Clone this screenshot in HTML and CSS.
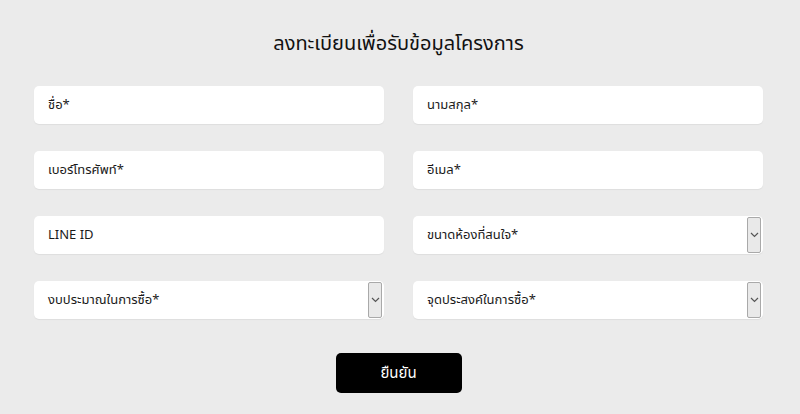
FILE: index.html
```html
<!DOCTYPE html>
<html lang="th">
<head>
    <meta charset="UTF-8">
    <meta name="viewport" content="width=device-width, initial-scale=1.0">
    <title>ลงทะเบียน</title>
    <link rel="stylesheet" href="styles.css">
</head>
<body>
    <section class="register">
        <h2 class="register-title">ลงทะเบียนเพื่อรับข้อมูลโครงการ</h2>
        <form class="register-form">
            <div class="field"><span class="field-text">ชื่อ*</span></div>
            <div class="field"><span class="field-text">นามสกุล*</span></div>
            <div class="field"><span class="field-text">เบอร์โทรศัพท์*</span></div>
            <div class="field"><span class="field-text">อีเมล*</span></div>
            <div class="field"><span class="field-text">LINE ID</span></div>
            <div class="field field-select">
                <span class="field-text">ขนาดห้องที่สนใจ*</span>
                <span class="select-arrow"><svg width="9" height="6" viewBox="0 0 9 6"><path d="M1 1l3.5 3.5L8 1" fill="none" stroke="#555" stroke-width="1.2"/></svg></span>
            </div>
            <div class="field field-select">
                <span class="field-text">งบประมาณในการซื้อ*</span>
                <span class="select-arrow"><svg width="9" height="6" viewBox="0 0 9 6"><path d="M1 1l3.5 3.5L8 1" fill="none" stroke="#555" stroke-width="1.2"/></svg></span>
            </div>
            <div class="field field-select">
                <span class="field-text">จุดประสงค์ในการซื้อ*</span>
                <span class="select-arrow"><svg width="9" height="6" viewBox="0 0 9 6"><path d="M1 1l3.5 3.5L8 1" fill="none" stroke="#555" stroke-width="1.2"/></svg></span>
            </div>
        </form>
        <div class="actions">
            <button class="submit-button" type="button">ยืนยัน</button>
        </div>
    </section>
</body>
</html>
```

FILE: styles.css
```css
body {
    margin: 0;
    padding: 0;
    background-color: #ebebeb;
    font-family: "Noto Sans Thai", "Noto Sans", "Liberation Sans", sans-serif;
    color: #111;
}

.register {
    padding: 28px 37px 0 34px;
}

.register-title {
    margin: 0 0 26px;
    text-align: center;
    font-size: 20px;
    font-weight: 400;
    line-height: 32px;
    color: #111;
}

.register-form {
    display: grid;
    grid-template-columns: 350px 350px;
    column-gap: 29px;
    row-gap: 27px;
}

.field {
    height: 38px;
    background-color: #ffffff;
    border-radius: 5px;
    box-shadow: 0 1px 1px rgba(0, 0, 0, 0.06);
    display: flex;
    align-items: center;
    padding-left: 14px;
    box-sizing: border-box;
}

.field-text {
    flex: 1;
    font-size: 13px;
    color: #1a1a1a;
}

.field-select {
    padding-right: 2px;
}

.select-arrow {
    width: 14px;
    height: 36px;
    box-sizing: border-box;
    border: 1px solid #a9a9a9;
    border-radius: 2px;
    background-color: #e9e9e9;
    display: flex;
    align-items: center;
    justify-content: center;
}

.actions {
    display: flex;
    justify-content: center;
    padding-top: 34px;
}

.submit-button {
    width: 126px;
    height: 40px;
    background-color: #000;
    color: #fff;
    border: 0;
    border-radius: 5px;
    font-family: inherit;
    font-size: 15px;
    cursor: pointer;
}
```
